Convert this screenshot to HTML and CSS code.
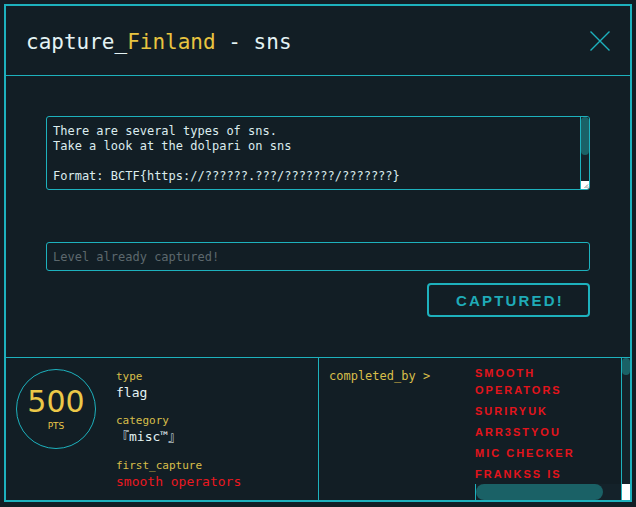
FILE: index.html
```html
<!DOCTYPE html>
<html lang="en">
<head>
<meta charset="utf-8">
<title>capture_Finland - sns</title>
<link rel="stylesheet" href="styles.css">
</head>
<body>
<div class="modal">
  <header class="modal-header">
    <h1 class="title"><span class="light">capture_</span><span class="gold">Finland</span><span class="light"> - sns</span></h1>
    <button class="close" aria-label="Close">
      <svg width="20" height="20" viewBox="0 0 20 20"><path d="M0.5 0.5 L19.5 19.5 M19.5 0.5 L0.5 19.5" stroke="#1db1bd" stroke-width="1.4" fill="none"/></svg>
    </button>
  </header>
  <section class="modal-body">
    <div class="desc-box">
      <textarea class="desc" readonly>There are several types of sns.
Take a look at the dolpari on sns

Format: BCTF{https://??????.???/???????/???????}</textarea>
      <div class="vbar">
        <div class="vthumb desc-thumb"></div>
        <div class="vspace"></div>
        <svg class="resizer" width="8" height="8" viewBox="0 0 8 8"><rect width="8" height="8" fill="#ffffff"/><path d="M7 3.5 L3.5 7 M7 5.5 L5.5 7" stroke="#6b6b6b" stroke-width="0.8"/></svg>
      </div>
    </div>
    <input class="flag-input" type="text" placeholder="Level already captured!" readonly>
    <div class="actions">
      <button class="submit">CAPTURED!</button>
    </div>
  </section>
  <footer class="stats">
    <div class="stats-left">
      <div class="points">
        <span class="pts-num">500</span>
        <span class="pts-label">PTS</span>
      </div>
      <dl class="info">
        <dt>type</dt>
        <dd>flag</dd>
        <dt>category</dt>
        <dd>『misc™』</dd>
        <dt>first_capture</dt>
        <dd class="red">smooth operators</dd>
      </dl>
    </div>
    <div class="stats-right">
      <div class="completed-label">completed_by &gt;</div>
      <div class="solvers-box">
        <div class="solvers-view">
          <ul class="solvers">
            <li>smooth operators</li>
            <li>suriryuk</li>
            <li>arr3styou</li>
            <li>mic checker</li>
            <li>frankss is</li>
          </ul>
        </div>
        <div class="vbar list-vbar">
          <div class="vthumb list-thumb"></div>
        </div>
        <div class="hbar">
          <div class="hthumb"></div>
        </div>
        <div class="corner"></div>
      </div>
    </div>
  </footer>
</div>
</body>
</html>
```
FILE: styles.css
```css
* { box-sizing: border-box; }

html, body {
  margin: 0;
  background: #121e25;
}

body {
  padding: 4px;
  font-family: "DejaVu Sans Mono", monospace;
}

.modal {
  width: 628px;
  height: 498px;
  border: 2px solid #1db1bd;
  display: flex;
  flex-direction: column;
  background: #121e25;
}

.modal-header {
  height: 70px;
  flex: none;
  border-bottom: 1px solid #1db1bd;
  display: flex;
  align-items: center;
  justify-content: space-between;
  padding: 0 20px;
}

.title {
  margin: 0;
  font: 400 21px/normal "DejaVu Sans Mono", monospace;
  padding-top: 2px;
}

.light { color: #e4f3f4; }
.gold { color: #e8c440; }

.close {
  width: 20px;
  height: 20px;
  padding: 0;
  border: 0;
  background: transparent;
  display: block;
}
.close svg { display: block; }

.modal-body {
  flex: none;
  padding: 40px;
  display: flex;
  flex-direction: column;
  border-bottom: 1px solid #1db1bd;
}

.desc-box {
  display: flex;
  height: 74px;
  border: 1px solid #1db1bd;
  border-radius: 3px;
  overflow: hidden;
}

.desc {
  flex: 1;
  display: block;
  margin: 0;
  padding: 7px 6px 6px;
  border: 0;
  background: transparent;
  color: #dcecee;
  font: 12px/15px "DejaVu Sans Mono", monospace;
  outline: none;
  overflow: hidden;
  resize: none;
}

.vbar {
  width: 9px;
  flex: none;
  display: flex;
  flex-direction: column;
  border-left: 1px solid #1db1bd;
  background: #14222a;
}

.vthumb {
  background: #1a6166;
  border-radius: 4px;
  flex: none;
}

.desc-thumb { height: 38px; }

.vspace { flex: 1; }

.resizer { display: block; flex: none; }

.flag-input {
  display: block;
  width: 100%;
  height: 29px;
  margin: 52px 0 0;
  padding: 0 6px;
  border: 1px solid #1db1bd;
  border-radius: 3px;
  background: transparent;
  color: #dcecee;
  font: 12px/15px "DejaVu Sans Mono", monospace;
  outline: none;
}
.flag-input::placeholder { color: #5d686d; }

.actions {
  display: flex;
  justify-content: flex-end;
  margin-top: 12px;
}

.submit {
  width: 163px;
  height: 34px;
  padding: 0 0 0 3px;
  border: 2px solid #1db1bd;
  border-radius: 4px;
  background: transparent;
  color: #1fabb7;
  font: 700 15px/1 "Liberation Sans", Arial, sans-serif;
  letter-spacing: 2.2px;
}

.stats {
  flex: 1;
  display: grid;
  grid-template-columns: 312px 312px;
  min-height: 0;
}

.stats-left {
  display: flex;
  align-items: flex-start;
  gap: 20px;
  padding: 11px 10px;
}

.points {
  width: 80px;
  height: 80px;
  flex: none;
  border: 1px solid #1db1bd;
  border-radius: 50%;
  display: flex;
  flex-direction: column;
  align-items: center;
  justify-content: center;
  color: #ecc848;
  font-family: "DejaVu Sans", sans-serif;
}

.pts-num {
  font-size: 30px;
  line-height: 32px;
}

.pts-label {
  font-size: 9px;
  line-height: 12px;
  margin-top: 2px;
}

.info {
  margin: 0;
}

.info dt {
  font: 11px/15px "DejaVu Sans Mono", monospace;
  color: #d8bf4a;
}

.info dd {
  margin: 0;
  font: 13px/17px "DejaVu Sans Mono", "Noto Sans CJK JP", monospace;
  color: #e4f3f4;
}

.info dd + dt { margin-top: 12px; }
.info dd + dt:last-of-type { margin-top: 13px; }

.info dd.red { color: #ea1820; }

.stats-right {
  display: flex;
  border-left: 1px solid #1db1bd;
  min-height: 0;
}

.completed-label {
  flex: 1;
  padding: 11px 0 0 10px;
  font: 12px/15px "DejaVu Sans Mono", monospace;
  color: #d8bf4a;
}

.solvers-box {
  width: 155px;
  height: 142px;
  flex: none;
  display: grid;
  grid-template-columns: 146px 9px;
  grid-template-rows: 126px 16px;
}

.solvers-view {
  overflow: hidden;
}

.solvers {
  margin: 0;
  padding: 7px 0 0;
  list-style: none;
}

.solvers li {
  font: 700 11px/17px "Liberation Sans", Arial, sans-serif;
  letter-spacing: 2px;
  text-transform: uppercase;
  color: #e3141c;
  margin-bottom: 4px;
}

.list-vbar { width: auto; }

.list-thumb { height: 17px; }

.hbar {
  border-left: 1px solid #1db1bd;
  background: #14222a;
  display: flex;
}

.hthumb {
  width: 127px;
  height: 16px;
  background: #1a6166;
  border-radius: 8px;
}

.corner {
  background: #ffffff;
  border-left: 1px solid #1db1bd;
}
```
